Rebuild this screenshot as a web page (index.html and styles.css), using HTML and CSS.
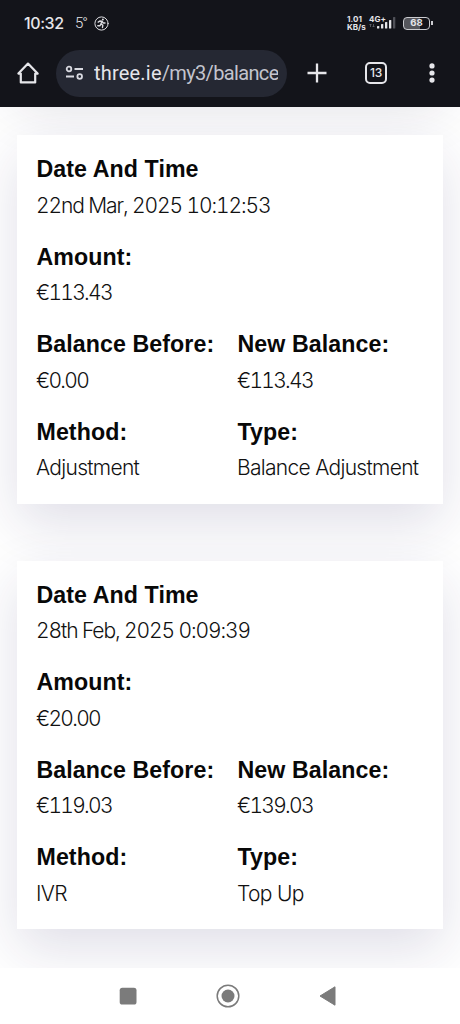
FILE: index.html
```html
<!DOCTYPE html>
<html lang="en">
<head>
<meta charset="utf-8">
<title>Balance history</title>
<link rel="stylesheet" href="styles.css">
</head>
<body>
<header class="chrome">
  <div class="status">
    <span class="clock">10:32</span>
    <span class="temp">5°</span>
    <svg class="runner" width="15" height="15" viewBox="0 0 15 15" fill="none" stroke="#dcdce0" stroke-linecap="round" stroke-linejoin="round"><circle cx="7.5" cy="7.5" r="6.6" stroke-width="1"/><circle cx="8.9" cy="3.6" r="1" fill="#dcdce0" stroke="none"/><path d="M4.2 6.1 5.8 5 8 5.2 6.9 8 8.8 9.2 8.5 11.5M6.9 8 6 9.8H3.8M8 5.2 9.2 7H11" stroke-width="1.4"/></svg>
    <span class="speed"><span>1.01</span><span>KB/s</span></span>
    <span class="network">4G+</span>
    <svg class="signal" width="27" height="13" viewBox="0 0 27 13"><path d="M1.5 10V7M.5 8 1.5 7 2.5 8M4.5 7v3M3.5 9l1 1 1-1" stroke="#686970" stroke-width=".8" fill="none"/><g fill="#e5e5e8"><rect x="8" y="9" width="2.3" height="2.5" rx=".6"/><rect x="12" y="7" width="2.3" height="4.5" rx=".6"/><rect x="16" y="5" width="2.3" height="6.5" rx=".6"/><rect x="20" y="3" width="2.3" height="8.5" rx=".6"/></g><rect x="24" y="0" width="2.3" height="11.5" rx=".6" fill="#505158"/></svg>
    <span class="battery">68</span>
  </div>
  <div class="toolbar">
    <svg class="home" width="22" height="22" viewBox="0 0 22 22" fill="none" stroke="#e6e6ea" stroke-width="2.2" stroke-linejoin="round"><path d="M1.4 11.6 11 1.6l9.6 10h-2.4v8.8H3.8v-8.8Z"/></svg>
    <div class="address">
      <svg width="19" height="16" viewBox="0 0 19 16" fill="none" stroke="#d9dae1" stroke-width="1.8"><circle cx="4" cy="4" r="2.3"/><path d="M9.5 4H18M1 11.5h8"/><circle cx="14.7" cy="11.5" r="2.3"/></svg>
      <span class="url"><b>three.ie</b>/my3/balance</span>
    </div>
    <svg class="plus" width="20" height="20" viewBox="0 0 20 20" stroke="#e6e6ea" stroke-width="2.3"><path d="M10 .5v19M.5 10h19"/></svg>
    <span class="tabs">13</span>
    <svg class="more" width="6" height="20" viewBox="0 0 6 20" fill="#e6e6ea"><circle cx="3" cy="2.9" r="2.6"/><circle cx="3" cy="10" r="2.6"/><circle cx="3" cy="17.1" r="2.6"/></svg>
  </div>
</header>
<main class="page">
  <section class="card card-past"></section>
  <section class="card">
    <div class="field wide"><h2>Date And Time</h2><p class="date">22nd Mar, 2025 10:12:53</p></div>
    <div class="field wide"><h2>Amount:</h2><p class="money">€113.43</p></div>
    <div class="field"><h2>Balance Before:</h2><p class="money">€0.00</p></div>
    <div class="field"><h2>New Balance:</h2><p class="money">€113.43</p></div>
    <div class="field"><h2>Method:</h2><p>Adjustment</p></div>
    <div class="field"><h2>Type:</h2><p>Balance Adjustment</p></div>
  </section>
  <section class="card">
    <div class="field wide"><h2>Date And Time</h2><p class="date">28th Feb, 2025 0:09:39</p></div>
    <div class="field wide"><h2>Amount:</h2><p class="money">€20.00</p></div>
    <div class="field"><h2>Balance Before:</h2><p class="money">€119.03</p></div>
    <div class="field"><h2>New Balance:</h2><p class="money">€139.03</p></div>
    <div class="field"><h2>Method:</h2><p>IVR</p></div>
    <div class="field"><h2>Type:</h2><p>Top Up</p></div>
  </section>
</main>
<nav class="system">
  <svg width="18" height="18" viewBox="0 0 18 18"><rect x=".7" y=".7" width="16.8" height="16.8" rx="2.6" fill="#7b7b7b"/></svg>
  <svg width="24" height="24" viewBox="0 0 24 24"><circle cx="12" cy="12" r="10.8" fill="none" stroke="#7b7b7b" stroke-width="1.5"/><circle cx="12" cy="12" r="6.5" fill="#7b7b7b"/></svg>
  <svg width="17" height="20" viewBox="0 0 17 20"><path d="M1 10 16 .8v18.4Z" fill="#7b7b7b" stroke="#7b7b7b" stroke-linejoin="round"/></svg>
</nav>
</body>
</html>
```
FILE: styles.css
```css
* { box-sizing: border-box; }
body { margin: 0; width: 460px; height: 1024px; overflow: hidden; display: flex; flex-direction: column; background: #fff; font-family: Inter, "Liberation Sans", sans-serif; }
.chrome { height: 107px; flex: none; background: #13141a; color: #e6e6ea; }
.status { height: 46px; padding-left: 24px; display: flex; align-items: center; }
.clock { width: 51px; font-size: 16px; font-weight: 500; letter-spacing: -.4px; }
.temp { width: 19px; font: 300 15px/16px Roboto, sans-serif; letter-spacing: -1px; }
.speed { margin-left: 238px; width: 22px; display: flex; flex-direction: column; font-size: 8px; line-height: 8px; font-weight: 700; }
.speed span:first-child { letter-spacing: .1px; }
.network { width: 18px; height: 16px; margin-right: -18px; font-size: 8px; line-height: 8px; font-weight: 700; }
.signal { margin-top: 1px; width: 27px; margin-right: 7px; }
.battery { position: relative; width: 27px; height: 13px; border: 1.5px solid #cbccd0; border-radius: 4px; font-size: 9.5px; font-weight: 700; line-height: 10px; text-align: center; background: linear-gradient(90deg, #55565c 62%, #13141a 62%); }
.battery::after { content: ""; position: absolute; right: -3.5px; top: 3px; width: 1.5px; height: 4px; background: #cbccd0; }
.toolbar { height: 54px; padding-left: 17px; display: flex; align-items: center; }
.address { width: 231px; height: 47px; margin-left: 17px; padding: 0 9px 0 9px; border-radius: 24px; background: #252833; display: flex; align-items: center; gap: 10px; }
.address svg { flex: none; }
.url { flex: 1; overflow: hidden; white-space: nowrap; font: 400 20px/30px Roboto, sans-serif; letter-spacing: -.65px; color: #c3c4ce; }
.url b { font-weight: 400; letter-spacing: .2px; color: #e5e5eb; }
.plus { margin-left: 20px; }
.tabs { width: 22px; height: 22px; margin-left: 38px; border: 2px solid #e6e6ea; border-radius: 5px; font-size: 12px; line-height: 18px; font-weight: 500; text-align: center; letter-spacing: -.3px; }
.more { margin-left: 42px; }
.page { height: 861px; flex: none; overflow: hidden; padding: 0 17px; display: flex; flex-direction: column; gap: 57px; }
.card { flex: none; height: 368.5px; padding: 16px 0 0 19.5px; display: grid; grid-template-columns: 201px 1fr; grid-auto-rows: 72px; row-gap: 15.5px; background: #fff; box-shadow: 0 20px 52px rgba(35, 25, 90, .14); }
.card-past { margin-top: -397.5px; box-shadow: 0 24px 54px rgba(30, 25, 70, .16); }
.wide { grid-column: 1 / -1; }
.field h2 { margin: 0; font: 700 23.2px/36px "Liberation Sans", Arial, sans-serif; letter-spacing: .08px; color: #080808; white-space: nowrap; }
.field p { margin: .5px 0 0 -.5px; font-size: 21px; line-height: 36px; font-weight: 300; letter-spacing: -.7px; color: #111; white-space: nowrap; }
.field .date { font-variant-numeric: tabular-nums; letter-spacing: -1.1px; }
.field .money { font-variant-numeric: tabular-nums; letter-spacing: -1.7px; }
.system { flex: 1; background: #fff; display: flex; align-items: center; padding-left: 119px; }
.system svg { flex: none; }
.system svg:nth-child(2) { margin-left: 79px; }
.system svg:nth-child(3) { margin-left: 79px; }
```
